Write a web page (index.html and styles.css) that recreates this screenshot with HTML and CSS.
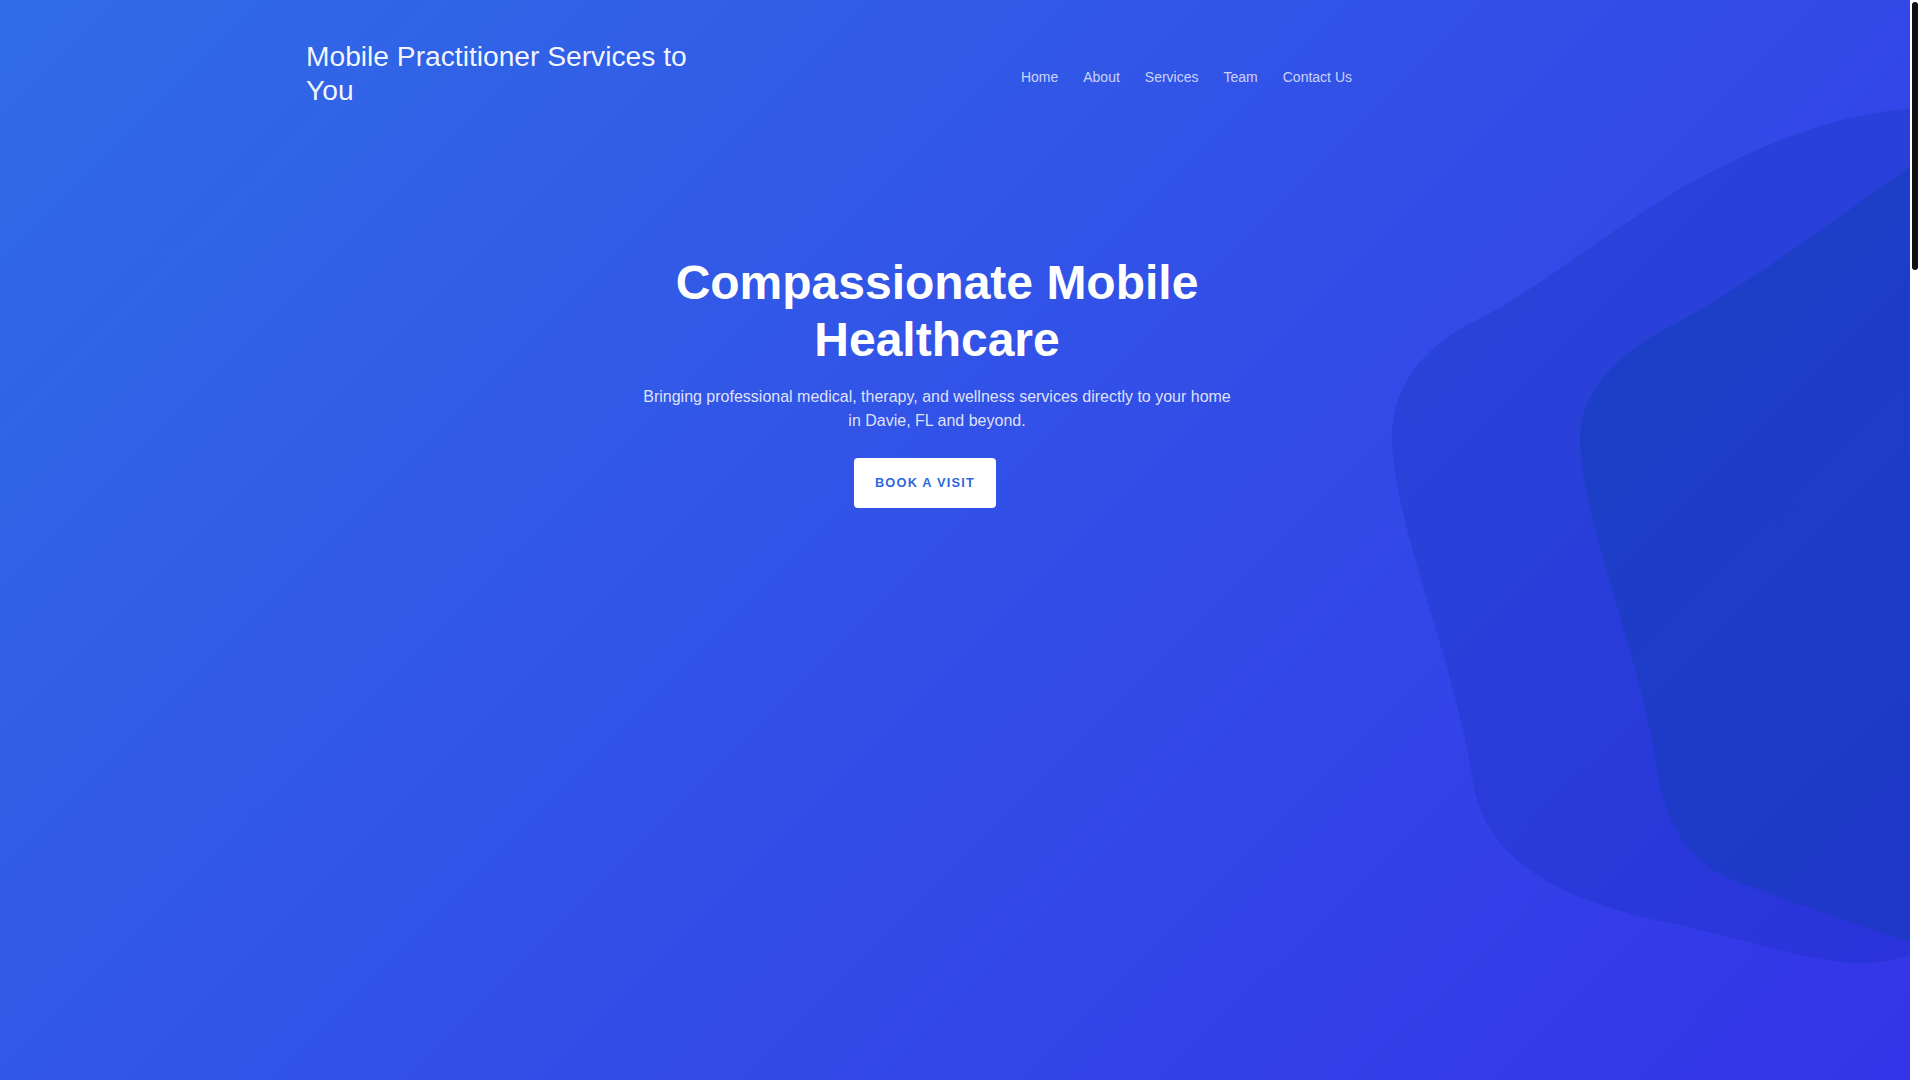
FILE: index.html
```html
<!DOCTYPE html>
<html lang="en">
<head>
<meta charset="utf-8">
<title>Mobile Practitioner Services to You</title>
<link rel="stylesheet" href="styles.css">
</head>
<body>
<div class="page">
  <section class="hero" id="home">
    <svg class="hero-blobs" viewBox="1380 0 530 1080" preserveAspectRatio="xMaxYMin slice" aria-hidden="true">
      <path class="blob-outer" d="M 1960 110 C 1880 100, 1790 130, 1703 176 C 1620 220, 1540 290, 1473 322 C 1420 348, 1392 390, 1392 437 C 1392 520, 1455 660, 1473 782 C 1485 860, 1560 900, 1665 922 C 1740 937, 1810 963, 1857 963 C 1900 963, 1930 950, 1960 930 Z"/>
      <path class="blob-inner" d="M 1960 136 C 1880 180, 1790 262, 1665 329 C 1620 353, 1580 390, 1580 437 C 1580 520, 1640 650, 1657 769 C 1667 838, 1700 868, 1742 884 C 1800 905, 1880 932, 1960 958 Z"/>
    </svg>
    <div class="container">
      <header class="site-header">
        <a class="logo" href="#home">Mobile Practitioner Services to You</a>
        <nav class="nav">
          <a href="#home">Home</a>
          <a href="#about">About</a>
          <a href="#services">Services</a>
          <a href="#team">Team</a>
          <a href="#contact">Contact Us</a>
        </nav>
      </header>
      <div class="hero-inner">
        <div class="hero-content">
          <h1>Compassionate Mobile Healthcare</h1>
          <p>Bringing professional medical, therapy, and wellness services directly to your home in Davie, FL and beyond.</p>
          <a class="btn" href="#contact">Book a Visit</a>
        </div>
      </div>
    </div>
  </section>
  <div class="scrollbar" aria-hidden="true">
    <div class="scrollbar-thumb"></div>
  </div>
</div>
</body>
</html>
```

FILE: styles.css
```css
html, body {
  margin: 0;
  padding: 0;
  height: 100%;
  overflow: hidden;
}

body {
  font-family: "Liberation Sans", Arial, sans-serif;
  color: #ffffff;
  background: #ffffff;
}

a {
  text-decoration: none;
}

.page {
  display: flex;
  height: 100vh;
}

.hero {
  position: relative;
  flex: 1;
  min-width: 0;
  height: 100vh;
  overflow: hidden;
  background: linear-gradient(135deg, #306ce6 0%, #3434e8 100%);
}

.scrollbar {
  flex: 0 0 10px;
  box-sizing: border-box;
  padding: 2px;
  background: #ffffff;
}

.scrollbar-thumb {
  height: 268px;
  background: #111111;
  border-radius: 3px;
}

.hero-blobs {
  position: absolute;
  top: 0;
  right: 0;
  width: 530px;
  height: 1080px;
  pointer-events: none;
}

.blob-outer {
  fill: rgba(6, 40, 165, 0.2);
}

.blob-inner {
  fill: rgba(8, 64, 166, 0.35);
}

.container {
  position: relative;
  max-width: 1298px;
  margin: 0 auto;
}

.site-header {
  display: flex;
  align-items: center;
  padding: 40px 0;
}

.logo {
  max-width: 410px;
  font-size: 28.2px;
  line-height: 1.2;
  color: rgba(255, 255, 255, 0.95);
}

.nav {
  display: flex;
  gap: 25px;
  margin-left: auto;
  margin-right: 252px;
  padding-top: 6px;
}

.nav a {
  font-size: 14px;
  color: rgba(255, 255, 255, 0.75);
}

.hero-inner {
  padding: 106px 36px 0 0;
}

.hero-content {
  max-width: 600px;
  margin: 0 auto;
  text-align: center;
}

.hero-content h1 {
  margin: 0 0 16px;
  font-size: 48px;
  line-height: 1.2;
  font-weight: 700;
  color: #ffffff;
}

.hero-content p {
  margin: 0 0 25px;
  font-size: 16px;
  line-height: 24px;
  color: rgba(255, 255, 255, 0.85);
}

.btn {
  display: inline-block;
  margin-right: 24px;
  padding: 17.5px 21px;
  background: #ffffff;
  color: #2f68e0;
  font-size: 12.8px;
  line-height: 15px;
  font-weight: 700;
  letter-spacing: 1.2px;
  text-transform: uppercase;
  border-radius: 4px;
}
```
